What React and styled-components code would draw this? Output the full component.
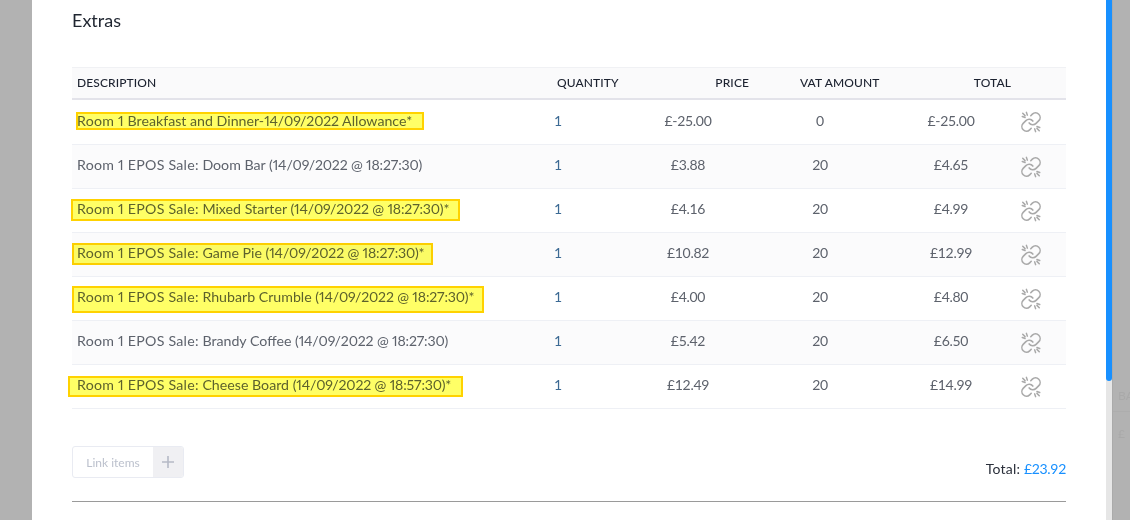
import React from 'react';
import styled, { createGlobalStyle } from 'styled-components';

const Global = createGlobalStyle`
  html, body { margin: 0; padding: 0; background: #b2b2b2; overflow: hidden; }
  body { font-family: Lato, "Liberation Sans", sans-serif; }
`;

const Page = styled.div`
  width: 1130px;
  height: 520px;
  display: flex;
  overflow: hidden;
  background: #b2b2b2;
`;
const Gutter = styled.div`width: 32px; flex: none;`;
const Modal = styled.main`
  width: 1074px;
  flex: none;
  box-sizing: border-box;
  background: #fff;
  padding: 9px 40px 0;
`;
const Title = styled.h2`
  margin: 0 0 35px;
  font-size: 18px;
  line-height: 23px;
  font-weight: 400;
  color: #1f2530;
`;
const Row = styled.div`
  display: grid;
  grid-template-columns: 485px 83px 96px 168px 94px 1fr;
  align-items: center;
  height: ${p => (p.$first ? 45 : 44)}px;
  box-sizing: border-box;
  padding-bottom: 4px;
  background: ${p => (p.$alt ? '#fbfbfc' : '#fff')};
  border-bottom: 1px solid #eef0f5;
`;
const HeadRow = styled.div`
  display: grid;
  grid-template-columns: 485px 107px 85px 182px 80px 1fr;
  align-items: center;
  height: 33px;
  box-sizing: border-box;
  padding-bottom: 1px;
  background: #fafafb;
  border-top: 1px solid #f0f1f4;
  border-bottom: 2px solid #e3e3ea;
`;
const Head = styled.div`
  font-size: 12px;
  font-weight: 500;
  letter-spacing: .1px;
  color: #1c2230;
  white-space: nowrap;
  text-align: ${p => p.$align || 'left'};
  padding: ${p => p.$pad || '0'};
`;
const Desc = styled.div`
  position: relative;
  font-size: 14.2px;
  font-variant-numeric: proportional-nums;
  color: #5d626c;
  padding-left: 5px;
  white-space: nowrap;
`;
const Lead = styled.span`letter-spacing: .25px;`;
const Stamp = styled.span`font-size: 14.1px; letter-spacing: -.15px;`;
const Highlight = styled.span`
  position: absolute;
  left: ${p => p.$l}px;
  width: ${p => p.$w}px;
  top: ${p => p.$t}px;
  height: ${p => p.$h}px;
  box-sizing: border-box;
  background: #ffff66;
  border: 2px solid #ffd200;
  mix-blend-mode: multiply;
`;
const Cell = styled.div`
  font-size: 14px;
  letter-spacing: -.3px;
  color: #5d626c;
  text-align: center;
`;
const QtyCell = styled.div`
  font-size: 14px;
  color: #3c6a94;
  margin-left: -3px;
`;
const IconCell = styled.div`
  display: flex;
  padding: 4px 0 0 22px;
  color: #a9a9a9;
`;
const Footer = styled.div`
  display: flex;
  justify-content: space-between;
  align-items: flex-end;
  margin-top: 37px;
  height: 32px;
`;
const LinkGroup = styled.div`
  display: flex;
  width: 112px;
  height: 32px;
  box-sizing: border-box;
  border: 1px solid #e9ebf2;
  border-radius: 3px;
  overflow: hidden;
`;
const LinkLabel = styled.div`
  flex: 1;
  display: flex;
  align-items: center;
  justify-content: center;
  font-size: 12px;
  color: #bcc1cd;
`;
const PlusBox = styled.div`
  width: 30px;
  display: flex;
  align-items: center;
  justify-content: center;
  background: #f0f0f3;
  color: #b5b9c6;
`;
const TotalLine = styled.div`
  font-size: 14px;
  letter-spacing: .2px;
  color: #2a2f3a;
  line-height: 18px;
`;
const TotalValue = styled.span`color: #1890ff; letter-spacing: -.3px;`;
const Rule = styled.hr`
  margin: 23px 0 0;
  border: 0;
  border-top: 1px solid #9a9a9a;
`;
const Track = styled.div`
  width: 6px;
  flex: none;
  background: #e6e6e6;
`;
const Thumb = styled.div`
  height: 381px;
  background: #1890ff;
  border-radius: 0 0 3px 3px;
`;
const Backdrop = styled.aside`
  flex: 1;
  border-left: 1px solid #aaa;
  padding-top: 388px;
  color: #a9a9a9;
  font-size: 12px;
  overflow: hidden;
  white-space: nowrap;
`;
const GhostHead = styled.div`height: 23px; padding-left: 5px; border-bottom: 1px solid #adadad;`;
const GhostCell = styled.div`padding: 14px 0 0 5px;`;

const UnlinkIcon = () => (
  <svg width="22" height="22" viewBox="0 0 24 24" fill="none" stroke="currentColor" strokeWidth="1.7" strokeLinecap="round" strokeLinejoin="round">
    <path d="M10 13a5 5 0 0 0 7.54.54l3-3a5 5 0 0 0-7.07-7.07l-1.72 1.71" />
    <path d="M14 11a5 5 0 0 0-7.54-.54l-3 3a5 5 0 0 0 7.07 7.07l1.71-1.71" />
    <path d="M7 1.5 8 4.5M2.5 6l3 1M3 2.5 5.5 5" />
    <path d="M17 22.5 16 19.5M21.5 18l-3-1M21 21.5 18.5 19" />
  </svg>
);

const SALE = 'Room 1 EPOS Sale:';
const rows = [
  { lead: 'Room 1', name: ' Breakfast and Dinner-', stamp: '14/09/2022', tail: ' Allowance*', p: '£-25.00', v: '0', t: '£-25.00', hl: { l: 4, w: 348, t: 0, h: 18 } },
  { lead: SALE, name: ' Doom Bar ', stamp: '(14/09/2022 @ 18:27:30)', p: '£3.88', v: '20', t: '£4.65' },
  { lead: SALE, name: ' Mixed Starter ', stamp: '(14/09/2022 @ 18:27:30)', tail: '*', p: '£4.16', v: '20', t: '£4.99', hl: { l: -1, w: 389, t: -1, h: 22 } },
  { lead: SALE, name: ' Game Pie ', stamp: '(14/09/2022 @ 18:27:30)', tail: '*', p: '£10.82', v: '20', t: '£12.99', hl: { l: 0, w: 361, t: -1, h: 22 } },
  { lead: SALE, name: ' Rhubarb Crumble ', stamp: '(14/09/2022 @ 18:27:30)', tail: '*', p: '£4.00', v: '20', t: '£4.80', hl: { l: 0, w: 412, t: -2, h: 27 } },
  { lead: SALE, name: ' Brandy Coffee ', stamp: '(14/09/2022 @ 18:27:30)', p: '£5.42', v: '20', t: '£6.50' },
  { lead: SALE, name: ' Cheese Board ', stamp: '(14/09/2022 @ 18:57:30)', tail: '*', p: '£12.49', v: '20', t: '£14.99', hl: { l: -4, w: 395, t: 0, h: 21 } },
];

export default function App() {
  return (
    <Page>
      <Global />
      <Gutter />
      <Modal>
        <Title>Extras</Title>
        <HeadRow>
          <Head $pad="0 0 0 5px">DESCRIPTION</Head>
          <Head>QUANTITY</Head>
          <Head $align="right">PRICE</Head>
          <Head $pad="0 0 0 51px">VAT AMOUNT</Head>
          <Head $align="right">TOTAL</Head>
          <span />
        </HeadRow>
        {rows.map((r, i) => (
          <Row key={r.name} $alt={i % 2 === 1} $first={i === 0}>
            <Desc>
              <Lead>{r.lead}</Lead>{r.name}<Stamp>{r.stamp}</Stamp>{r.tail}
              {r.hl && <Highlight $l={r.hl.l} $w={r.hl.w} $t={r.hl.t} $h={r.hl.h} />}
            </Desc>
            <QtyCell>1</QtyCell>
            <Cell>{r.p}</Cell>
            <Cell>{r.v}</Cell>
            <Cell>{r.t}</Cell>
            <IconCell><UnlinkIcon /></IconCell>
          </Row>
        ))}
        <Footer>
          <LinkGroup>
            <LinkLabel>Link items</LinkLabel>
            <PlusBox>
              <svg width="14" height="14" viewBox="0 0 14 14"><path d="M7 1v12M1 7h12" stroke="currentColor" strokeWidth="1.6" /></svg>
            </PlusBox>
          </LinkGroup>
          <TotalLine>Total: <TotalValue>£23.92</TotalValue></TotalLine>
        </Footer>
        <Rule />
      </Modal>
      <Track><Thumb /></Track>
      <Backdrop>
        <GhostHead>BA</GhostHead>
        <GhostCell>£</GhostCell>
      </Backdrop>
    </Page>
  );
}
